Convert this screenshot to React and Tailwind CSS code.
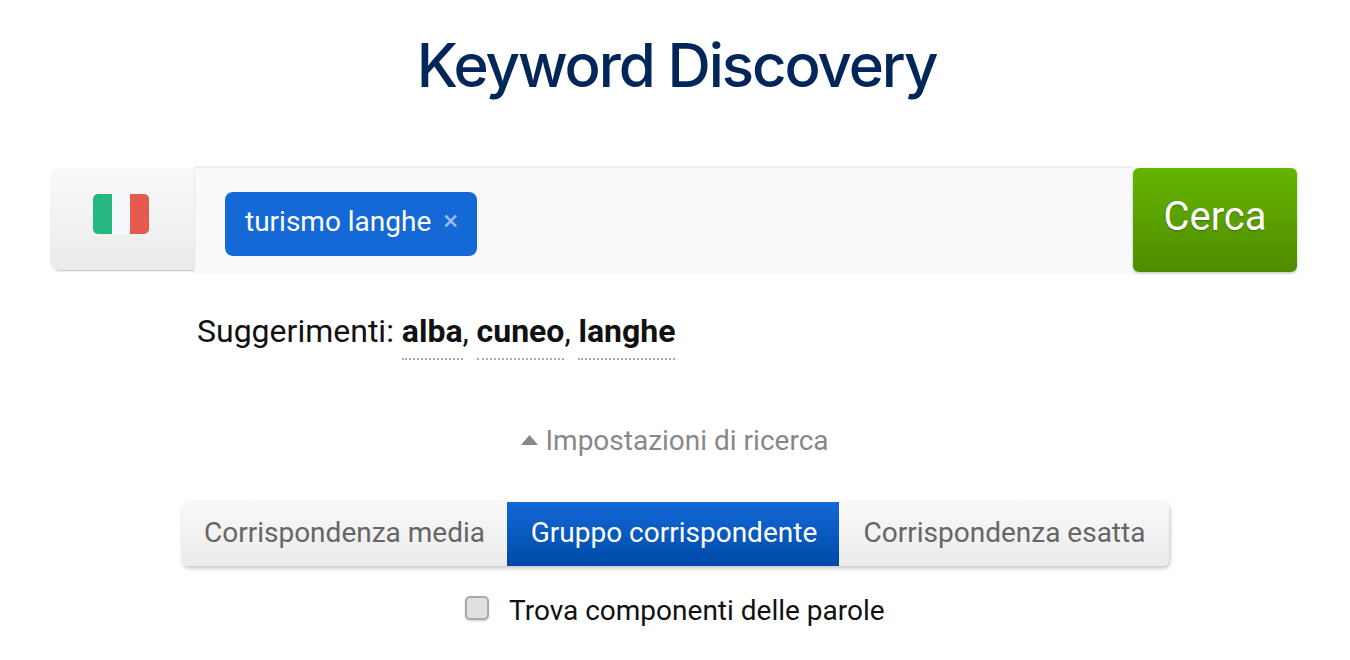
export default function App() {
  const roboto = "font-['Roboto',sans-serif]";
  return (
    <div className={`w-[1350px] h-[660px] overflow-hidden bg-white ${roboto}`}>
      <h1 className="h-[168px] pt-[28px] pl-[3px] text-center font-['Inter',sans-serif] text-[60px] leading-[74px] font-medium tracking-[-2.1px] text-[#02265a]">
        Keyword Discovery
      </h1>
      <div className="ml-[50px] w-[1247px] h-[106px] flex items-start">
        <div className="relative z-10 w-[144px] h-[102px] pb-[10px] pr-[2px] shrink-0 flex items-center justify-center rounded-lg rounded-r-none bg-gradient-to-b from-[#f9f9f9] to-[#ebebeb] shadow-[1px_2px_2px_-1px_rgba(0,0,0,0.25)]">
          <div className="w-[56px] h-[40px] flex overflow-hidden rounded-[5px]">
            <div className="w-[19px] bg-[#25b882]" />
            <div className="w-[18px] bg-[#f5f8fc]" />
            <div className="w-[19px] bg-[#e55b50]" />
          </div>
        </div>
        <div className="flex-1 h-[106px] pl-[31px] pt-[24px] bg-[#f9f9f9] shadow-[0_-1px_2px_rgba(0,0,0,0.12)]">
          <div className="w-[252px] h-[64px] pl-[20px] flex items-center rounded-lg bg-[#1469d6] text-white text-[28px]">
            <span className="-mt-[4px]">turismo langhe</span>
            <span className="ml-[12px] -mt-[6px] text-[#9cc0ee] text-[28px] leading-none">×</span>
          </div>
        </div>
        <div className="w-[164px] h-[106px] shrink-0 bg-[#f9f9f9]">
          <button className="w-[164px] h-[104px] rounded-md bg-gradient-to-b from-[#66b500] to-[#4f8c00] text-white text-[40px] pb-[7px] [text-shadow:0_1px_2px_rgba(0,0,0,0.3)] shadow-[0_1px_3px_rgba(0,0,0,0.25)]">
            Cerca
          </button>
        </div>
      </div>
      <div className="ml-[197px] mt-[35px] h-[51px] flex items-start text-[32px] leading-[44px] text-[#111]">
        <span>Suggerimenti:&nbsp;</span>
        <b className="h-[51px] font-bold border-b-2 border-dotted border-[#aaa]">alba</b>
        <span className="w-[14px]">,</span>
        <b className="h-[51px] font-bold border-b-2 border-dotted border-[#aaa]">cuneo</b>
        <span className="w-[14px]">,</span>
        <b className="h-[51px] font-bold border-b-2 border-dotted border-[#aaa]">langhe</b>
      </div>
      <div className="mt-[61px] flex items-center justify-center text-[28px] leading-[40px] text-[#888]">
        <svg width="17" height="10" viewBox="0 0 17 10" className="mr-[7px] -mt-[2px]"><path d="M8.5 0 17 10H0Z" fill="#888" /></svg>
        <span>Impostazioni di ricerca</span>
      </div>
      <div className="mt-[41px] ml-[182px] w-[987px] h-[64px] flex rounded-md bg-gradient-to-b from-[#f9f9f9] to-[#ebebeb] shadow-[1px_2px_4px_rgba(0,0,0,0.25)] text-[28px] leading-[40px] text-[#666]">
        <div className="w-[325px] pb-[2px] flex items-center justify-center">Corrispondenza media</div>
        <div className="w-[332px] pb-[2px] pl-[2px] flex items-center justify-center bg-gradient-to-b from-[#1469d6] to-[#004aa8] text-white">Gruppo corrispondente</div>
        <div className="w-[330px] pb-[2px] pl-[1px] flex items-center justify-center">Corrispondenza esatta</div>
      </div>
      <div className="mt-[27px] ml-[465px] flex items-center text-[28px] leading-[36px] text-[#111]">
        <div className="w-[24px] h-[24px] -mt-[7px] rounded-[5px] border-2 border-[#aaa] bg-[#e0e0e0] shadow-[0_1px_2px_rgba(0,0,0,0.2)]" />
        <span className="ml-[20px]">Trova componenti delle parole</span>
      </div>
    </div>
  );
}
